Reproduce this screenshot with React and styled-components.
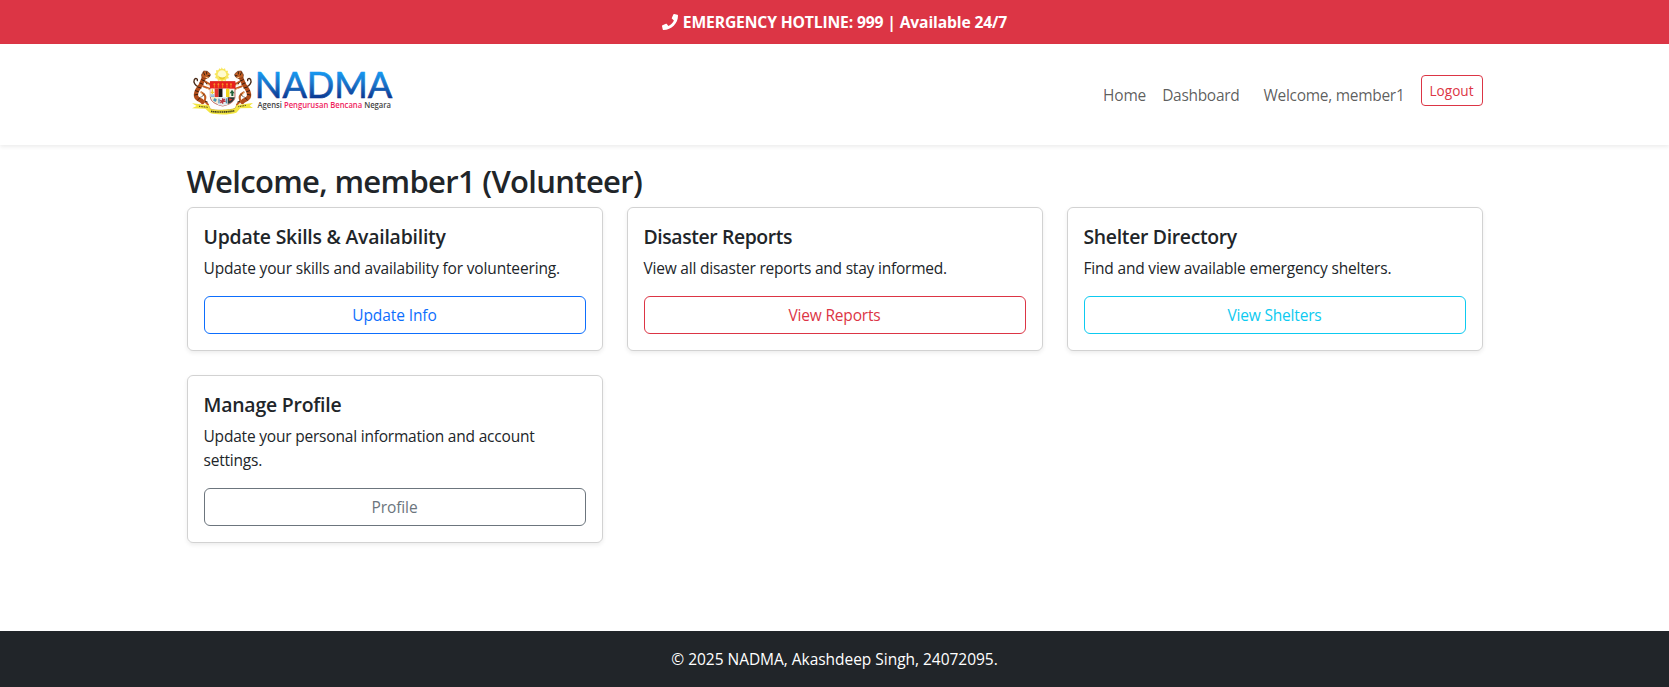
import React from 'react';
import styled, { createGlobalStyle } from 'styled-components';
import { FaPhone } from 'react-icons/fa';

const GlobalStyle = createGlobalStyle`
  *, *::before, *::after { box-sizing: border-box; }
  body {
    margin: 0;
    background: #fff;
    color: #212529;
    font-family: 'Open Sans', 'Noto Sans', sans-serif;
    font-size: 15.5px;
    line-height: 24px;
  }
`;

const Page = styled.div`
  display: flex;
  flex-direction: column;
  min-height: 100vh;
`;

const Hotline = styled.div`
  display: flex;
  align-items: center;
  justify-content: center;
  gap: 5px;
  height: 44px;
  padding-bottom: 1px;
  background: #dc3545;
  color: #fff;
  font-size: 15.7px;
  font-weight: 700;
  letter-spacing: -0.16px;
`;

const Navbar = styled.nav`
  height: 101px;
  padding: 16px 0;
  box-shadow: 0 2px 4px rgba(0, 0, 0, 0.075);
`;

const Container = styled.div`
  width: 1320px;
  margin: 0 auto;
  padding: 0 12px;
`;

const NavRow = styled(Container)`
  display: flex;
  justify-content: space-between;
`;

const Logo = styled.svg`
  display: block;
  width: 210px;
  height: 69px;
`;

const NavList = styled.div`
  display: flex;
  align-items: flex-start;
  padding-top: 15px;
`;

const NavLink = styled.a`
  padding: 8px;
  color: rgba(0, 0, 0, 0.65);
  letter-spacing: ${(p) => p.$spacing || 0}px;
  margin: 0 ${(p) => (p.$user ? 8 : 0)}px;
`;

const LogoutButton = styled.button`
  width: 62px;
  height: 31px;
  padding: 0;
  border: 1px solid #dc3545;
  border-radius: 4px;
  background: transparent;
  color: #dc3545;
  font: 400 13.6px/21px 'Open Sans', sans-serif;
`;

const Main = styled.main`
  flex: 1;
`;

const Title = styled.h2`
  margin: 17px 0 7px;
  font-size: 31px;
  font-weight: 600;
  line-height: 38px;
  letter-spacing: -0.68px;
`;

const CardGrid = styled.div`
  display: grid;
  grid-template-columns: repeat(3, 1fr);
  gap: 24px;
`;

const Card = styled.section`
  display: flex;
  flex-direction: column;
  padding: 16px;
  border: 1px solid rgba(0, 0, 0, 0.175);
  border-radius: 6px;
  box-shadow: 0 2px 4px rgba(0, 0, 0, 0.075);
`;

const CardTitle = styled.h5`
  margin: 1px 0 7px;
  font-size: 19.4px;
  font-weight: 600;
  line-height: 24px;
  letter-spacing: ${(p) => p.$spacing}px;
`;

const CardText = styled.p`
  margin: 0 0 16px;
  letter-spacing: ${(p) => p.$spacing}px;
`;

const CardButton = styled.button`
  height: 38px;
  padding: 0 12px;
  border: 1px solid ${(p) => p.$color};
  border-radius: 6px;
  background: transparent;
  color: ${(p) => p.$color};
  font: 400 15.5px/24px 'Open Sans', sans-serif;
  letter-spacing: ${(p) => p.$spacing}px;
`;

const Footer = styled.footer`
  height: 56px;
  padding: 16px 0;
  background: #212529;
  color: #fff;
  text-align: center;
  letter-spacing: -0.03px;
`;

const cards = [
  { title: 'Update Skills & Availability', titleSpacing: -0.22, text: 'Update your skills and availability for volunteering.', textSpacing: -0.15, action: 'Update Info', actionSpacing: -0.1, color: '#0d6efd' },
  { title: 'Disaster Reports', titleSpacing: -0.4, text: 'View all disaster reports and stay informed.', textSpacing: -0.21, action: 'View Reports', actionSpacing: -0.18, color: '#dc3545' },
  { title: 'Shelter Directory', titleSpacing: -0.32, text: 'Find and view available emergency shelters.', textSpacing: -0.19, action: 'View Shelters', actionSpacing: -0.18, color: '#0dcaf0' },
  { title: 'Manage Profile', titleSpacing: -0.2, text: 'Update your personal information and account settings.', textSpacing: -0.2, action: 'Profile', actionSpacing: -0.1, color: '#6c757d' },
];

/* Supporter tiger facing the shield; reused mirrored for the right side. */
function Tiger() {
  return (
    <g fill="none" strokeLinecap="round" strokeLinejoin="round">
      <path d="M56 96C46 93 39 82 43 74C46 68 54 71 52 77" stroke="#4a2a17" strokeWidth="4" />
      <path d="M76 62C68 72 67 82 61 92C53 103 46 110 48 123C51 136 62 132 68 141" stroke="#b24c1a" strokeWidth="13" />
      <path d="M64 112C76 118 78 128 74 138L84 149M76 80L90 88M70 94L88 101" stroke="#c25d22" strokeWidth="6" />
      <path d="M65 59L71 48L82 49L91 57L88 66L78 71L67 68Z" fill="#c25d22" stroke="#6c3318" strokeWidth="2" />
      <path d="M65 74L74 78M60 84L69 88M53 96L63 99M46 107L55 110M44 120L53 118M53 135L61 127M71 53L74 60M80 51L80 57M72 119L65 125M78 83L80 87M76 139L82 141M84 62L90 62" stroke="#25170f" strokeWidth="2.6" />
      <path d="M78 67L84 69M62 111L68 121M83 101L88 104M80 89L87 90" stroke="#f5c68e" strokeWidth="3" />
    </g>
  );
}

function NadmaLogo() {
  return (
    <Logo viewBox="0 0 210 69" role="img" aria-label="NADMA">
      <defs>
        <linearGradient id="wordmark" gradientUnits="userSpaceOnUse" x1="0" y1="11" x2="0" y2="38">
          <stop offset="0" stopColor="#159cf5" />
          <stop offset="0.45" stopColor="#1976cb" />
          <stop offset="1" stopColor="#0b3791" />
        </linearGradient>
      </defs>
      <g transform="translate(-7 -5) scale(0.33333)">
        <path d="M125 37L129 43L135 40L137 47L144 47L143 54L149 58L144 63L147 70L139 71L138 78L131 76L126 82L121 76L114 78L112 71L105 69L108 62L103 57L109 53L108 46L115 46L118 40L123 43Z" fill="#f8e65c" />
        <circle cx="126" cy="59" r="13" fill="#fffbd0" />
        <path d="M114 61C116 78 136 78 139 61C134 70 120 70 114 61Z" fill="#e8cc28" />
        <Tiger />
        <g transform="translate(255 0) scale(-1 1)"><Tiger /></g>
        <path d="M91 80H165V125C165 140 148 149 128 153C108 149 91 140 91 125Z" fill="#f6f3e6" stroke="#a3201b" strokeWidth="2" />
        <path d="M90 79H166V101H90Z" fill="#e8201c" />
        <path d="M103 84V98M115 84V98M128 84V98M141 84V98M153 84V98M100 88H106M112 88H118M125 88H131M138 88H144M150 88H156" stroke="#f9a92b" strokeWidth="2" />
        <path d="M91 101H104V126H91Z" fill="#f7f7ef" />
        <path d="M104 101H116V126H104Z" fill="#e3342c" />
        <path d="M116 101H128V126H116Z" fill="#171717" />
        <path d="M128 101H140V126H128Z" fill="#fff" />
        <path d="M138 101H148V126H138Z" fill="#f1d51d" />
        <path d="M97 103V117M92 112H103" stroke="#efcd32" strokeWidth="4" />
        <path d="M92 120H103M92 124H103" stroke="#3184bb" strokeWidth="2" />
        <path d="M156 104L149 115H154V123H160V115H164Z" fill="#215f3a" />
        <path d="M94 127H113V144L100 139Z" fill="#f6e9bf" />
        <path d="M104 129L111 134L106 141L99 136Z" fill="#4694bd" />
        <path d="M113 126H143V149L128 152L113 149Z" fill="#e4edf1" />
        <path d="M128 130V146M119 137L137 139M121 144L135 132" stroke="#bb3944" strokeWidth="4" />
        <path d="M117 131V145M139 130V145" stroke="#347ba5" strokeWidth="3" />
        <path d="M143 127H164C163 137 154 144 143 147Z" fill="#323a37" />
        <path d="M146 130L157 133L149 139Z" fill="#e23530" />
        <path d="M36 145L56 147L87 151L90 161C102 166 150 166 165 160L171 150L219 144L209 152L219 159L181 160L169 173C149 180 109 180 90 174L76 161L36 160L50 153Z" fill="#f3e641" />
        <path d="M86 151L91 162C106 167 148 167 165 160L170 150" fill="none" stroke="#c5ac20" strokeWidth="2" />
        <path d="M57 154L84 157M175 155L198 151" stroke="#5d551d" strokeWidth="3.5" strokeDasharray="3 2" />
        <path d="M93 169C109 172 145 172 164 167" fill="none" stroke="#3d3919" strokeWidth="5" strokeDasharray="4 1.5" />
      </g>
      <text x="67.8" y="38.4" fill="url(#wordmark)" stroke="url(#wordmark)" strokeWidth="0.7" fontFamily="Lato, sans-serif" fontSize="36.5" textLength="137.5" lengthAdjust="spacingAndGlyphs">NADMA</text>
      <text x="70.5" y="48.3" fill="#444" fontFamily="'Open Sans', sans-serif" fontSize="8.2" fontWeight="600" textLength="133.5" lengthAdjust="spacingAndGlyphs">
        Agensi <tspan fill="#ef2460">Pengurusan Bencana</tspan> Negara
      </text>
    </Logo>
  );
}

export default function App() {
  return (
    <Page>
      <GlobalStyle />
      <Hotline>
        <FaPhone size={16} />
        <span>EMERGENCY HOTLINE: 999 | Available 24/7</span>
      </Hotline>
      <Navbar>
        <NavRow>
          <NadmaLogo />
          <NavList>
            <NavLink $spacing={-0.2}>Home</NavLink>
            <NavLink $spacing={-0.3}>Dashboard</NavLink>
            <NavLink $user $spacing={-0.28}>Welcome, member1</NavLink>
            <LogoutButton>Logout</LogoutButton>
          </NavList>
        </NavRow>
      </Navbar>
      <Main>
        <Container>
          <Title>Welcome, member1 (Volunteer)</Title>
          <CardGrid>
            {cards.map((c) => (
              <Card key={c.title}>
                <CardTitle $spacing={c.titleSpacing}>{c.title}</CardTitle>
                <CardText $spacing={c.textSpacing}>{c.text}</CardText>
                <CardButton $color={c.color} $spacing={c.actionSpacing}>{c.action}</CardButton>
              </Card>
            ))}
          </CardGrid>
        </Container>
      </Main>
      <Footer>© 2025 NADMA, Akashdeep Singh, 24072095.</Footer>
    </Page>
  );
}
